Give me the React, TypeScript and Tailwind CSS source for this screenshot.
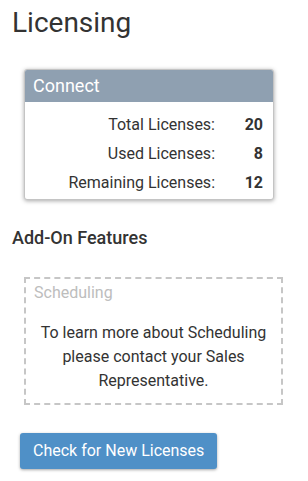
export default function App() {
    const rows = [
        { label: "Total Licenses:", value: 20 },
        { label: "Used Licenses:", value: 8 },
        { label: "Remaining Licenses:", value: 12 },
    ];

    return (
        <div className="min-h-[481px] bg-white pl-[12px] pt-[6px] text-[#333333] font-['Roboto',sans-serif]">
            <h1 className="text-[28px] leading-[34px]">Licensing</h1>

            {/* Connect card */}
            <div className="ml-[12px] mt-[29px] w-[250px] rounded-[3px] border border-[#c4c4c4] bg-white shadow-[0_1px_4px_rgba(0,0,0,0.35)]">
                <div className="rounded-t-[2px] bg-[#8fa0b1] px-[8px] pt-[4px] pb-[4px] text-[18px] leading-[24px] text-white">
                    Connect
                </div>
                <div className="pt-[8px] pb-[2px] pr-[10px]">
                    {rows.map((row) => (
                        <div key={row.label} className="flex text-[16px] leading-[29px]">
                            <span className="flex-1 text-right">{row.label}</span>
                            <span className="w-[48px] text-right font-bold">{row.value}</span>
                        </div>
                    ))}
                </div>
            </div>

            <h2 className="mt-[26px] text-[18px] leading-[24px] font-medium">Add-On Features</h2>

            {/* Add-on box */}
            <div className="ml-[12px] mt-[27px] w-[259px] border-2 border-dashed border-[#c6c6c6] px-[8px] pt-[2px] pb-[10px]">
                <div className="text-[16px] leading-[24px] text-[#bdbdbd]">Scheduling</div>
                <p className="mt-[16px] text-center text-[16px] leading-[24px]">
                    To learn more about Scheduling please contact your Sales Representative.
                </p>
            </div>

            <button className="ml-[8px] mt-[28px] h-[36px] rounded-[3px] bg-[#4f90c7] px-[13px] text-[16px] text-white shadow-[0_1px_3px_rgba(0,0,0,0.35)]">
                Check for New Licenses
            </button>
        </div>
    );
}
